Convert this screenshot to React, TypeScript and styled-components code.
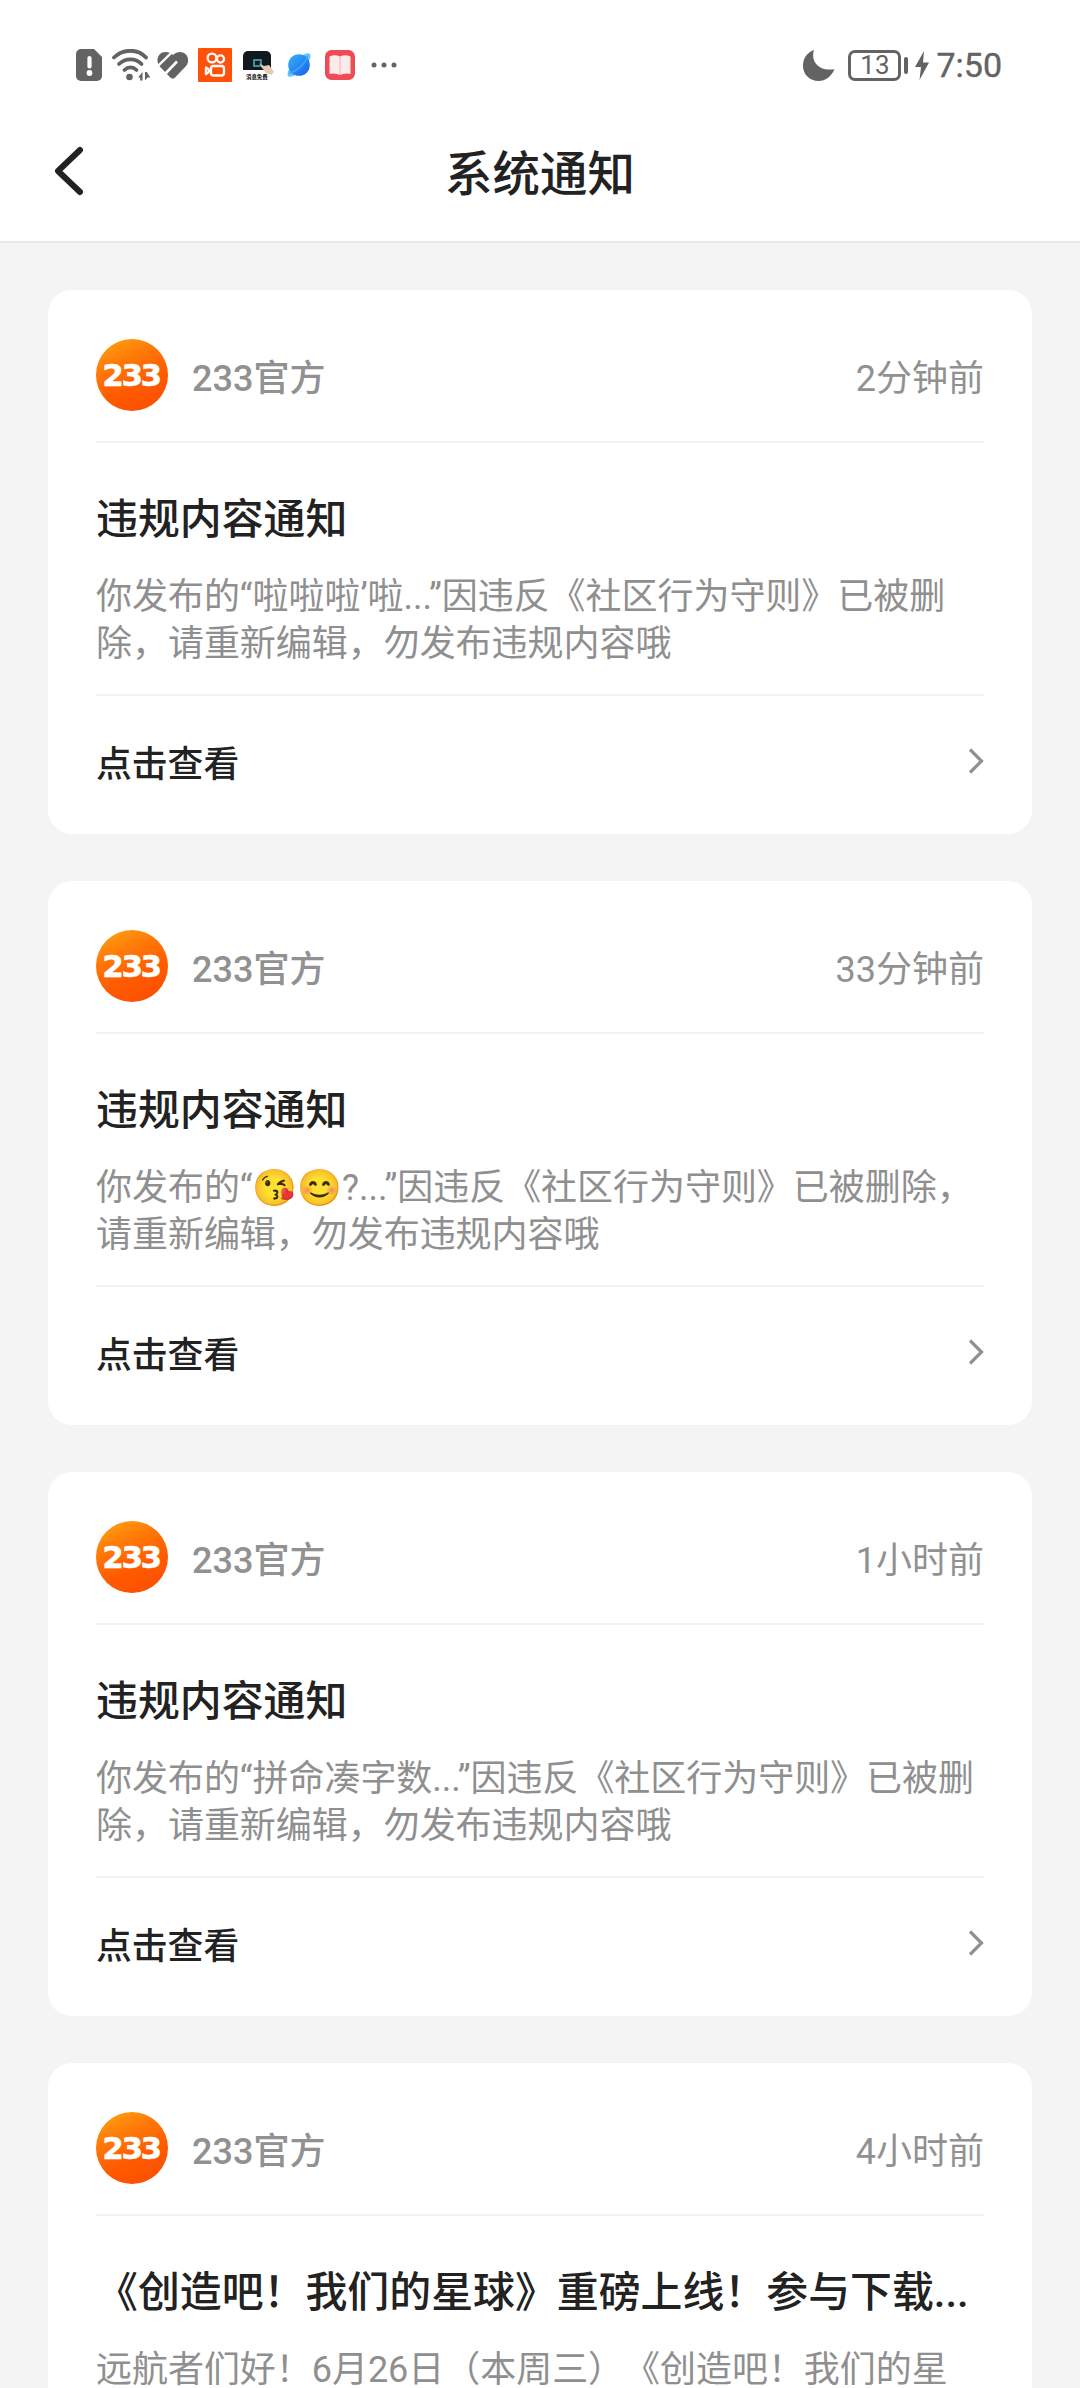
import React from "react";
import styled, { createGlobalStyle } from "styled-components";

const GlobalStyle = createGlobalStyle`
  * { box-sizing: border-box; }
  html, body { margin: 0; padding: 0; background: #f4f4f4; }
  body {
    font-family: Roboto, "Noto Sans CJK SC", "Noto Color Emoji", sans-serif;
    text-spacing-trim: space-all;
    overflow: hidden;
  }
`;

const Screen = styled.main`
  width: 1080px;
  height: 2388px;
  overflow: hidden;
  display: flex;
  flex-direction: column;
  background: #f4f4f4;
`;

const StatusBar = styled.header`
  height: 104px;
  flex: none;
  padding: 26px 78px 0 76px;
  display: flex;
  justify-content: space-between;
  align-items: flex-start;
  background: #fff;
  color: #636363;
`;

const StatusGroup = styled.div`
  display: flex;
  align-items: center;
  height: 78px;
`;

const StatusIcon = styled.svg<{ $gap?: number }>`
  display: block;
  flex: none;
  margin-left: ${(p) => p.$gap ?? 0}px;
`;

const Battery = styled.div`
  width: 53px;
  height: 31px;
  margin-left: 13px;
  border: 3px solid #636363;
  border-radius: 7px;
  display: flex;
  align-items: center;
  justify-content: center;
  font-size: 26px;
  line-height: 25px;
`;

const BatteryCap = styled.span`
  width: 4px;
  height: 17px;
  margin-left: 3px;
  border-radius: 2px;
  background: #636363;
`;

const Clock = styled.span`
  margin-left: 7px;
  font-size: 34px;
  line-height: 40px;
  -webkit-text-stroke: 0.4px #636363;
`;

const NavBar = styled.nav`
  height: 139px;
  flex: none;
  display: grid;
  grid-template-columns: 120px 1fr 120px;
  align-items: center;
  background: #fff;
  border-bottom: 2px solid #e9e9e9;
`;

const BackButton = styled.button`
  height: 134px;
  padding: 0 0 4px 52px;
  border: 0;
  background: none;
  display: flex;
  align-items: center;
`;

const PageTitle = styled.h1`
  margin: 0;
  padding-top: 4px;
  text-align: center;
  font-size: 47.5px;
  line-height: 60px;
  font-weight: 500;
  color: #222;
`;

const Feed = styled.section`
  flex: none;
  padding: 47px 48px 0;
  display: flex;
  flex-direction: column;
  gap: 47px;
`;

const Card = styled.article`
  height: 544px;
  flex: none;
  padding: 0 48px;
  border-radius: 24px;
  background: #fff;
`;

const CardHead = styled.div`
  height: 153px;
  padding: 49px 0 30px;
  display: flex;
  align-items: center;
  border-bottom: 2px solid #f1f1f1;
`;

const Avatar = styled.div`
  width: 72px;
  height: 72px;
  padding-right: 2px;
  border-radius: 50%;
  display: flex;
  align-items: center;
  justify-content: center;
  background: linear-gradient(155deg, #ffa210 4%, #ff7a08 32%, #ff5a00 62%, #fb4c02 100%);
  color: #fff;
  font: bold 31px/72px "DejaVu Sans", sans-serif;
  letter-spacing: -2.4px;
  -webkit-text-stroke: 0.5px #fff;
`;

const Sender = styled.span`
  flex: 1;
  margin-left: 24px;
  padding-top: 7px;
  font-size: 36px;
  line-height: 44px;
  font-weight: 500;
  color: #919191;
`;

const Time = styled.time`
  padding-top: 7px;
  font-size: 36px;
  line-height: 44px;
  color: #919191;
`;

const CardBody = styled.div`
  height: 253px;
  padding-top: 47px;
  border-bottom: 2px solid #f3f3f3;
`;

const CardTitle = styled.h2`
  margin: 0;
  font-size: 41.9px;
  line-height: 60px;
  font-weight: 500;
  color: #222;
  white-space: nowrap;
`;

const CardText = styled.p`
  margin: 24px 0 0;
  font-size: 36px;
  line-height: 47px;
  letter-spacing: -0.04px;
  color: #8f8f8f;
`;

const CardAction = styled.div`
  height: 138px;
  display: flex;
  align-items: center;
  justify-content: space-between;
  font-size: 35.8px;
  line-height: 44px;
  font-weight: 500;
  color: #222;
`;

const Chevron = styled.svg`
  display: block;
  margin-bottom: 9px;
`;

interface Notice {
  time: string;
  title: string;
  text: string;
}

const notices: Notice[] = [
  {
    time: "2分钟前",
    title: "违规内容通知",
    text: "你发布的“啦啦啦’啦...”因违反《社区行为守则》已被删除，请重新编辑，勿发布违规内容哦",
  },
  {
    time: "33分钟前",
    title: "违规内容通知",
    text: "你发布的“😘😊?...”因违反《社区行为守则》已被删除，请重新编辑，勿发布违规内容哦",
  },
  {
    time: "1小时前",
    title: "违规内容通知",
    text: "你发布的“拼命凑字数...”因违反《社区行为守则》已被删除，请重新编辑，勿发布违规内容哦",
  },
  {
    time: "4小时前",
    title: "《创造吧！我们的星球》重磅上线！参与下载...",
    text: "远航者们好！6月26日（本周三）《创造吧！我们的星",
  },
];

const G = "#636363";

function StatusLeft() {
  return (
    <StatusGroup>
      <StatusIcon width="26" height="32" viewBox="0 0 26 32">
        <path d="M5 0h13l8 8v19a5 5 0 0 1-5 5H5a5 5 0 0 1-5-5V5a5 5 0 0 1 5-5z" fill={G} />
        <path d="M13.500 9v8.500" stroke="#fff" strokeWidth="4.200" strokeLinecap="round" />
        <circle cx="13.500" cy="24" r="2.900" fill="#fff" />
      </StatusIcon>
      <StatusIcon $gap={9} width="40" height="32" viewBox="0 0 40 32">
        <g fill="none" stroke={G} strokeWidth="3.800" strokeLinecap="round">
          <path d="M3 8.500C12-.5 27-.5 35 8.500" />
          <path d="M8 15c6.500-6.300 16.500-6.300 22.500 0" />
          <path d="M13.500 21c3.500-3.500 8.500-3.500 12 0" />
        </g>
        <circle cx="18.500" cy="28" r="3.300" fill={G} />
        <path d="M31.500 23v8.500h-2.300v-3H27zM34 31.500V23h1.800l3.500 5.500h-2.800z" fill={G} />
      </StatusIcon>
      <StatusIcon $gap={6} width="32" height="28" viewBox="0 0 32 28">
        <path
          d="M8.500 1c3 0 5.500 1 7.500 3C18 2 20.500 1 23 1c5 0 8.300 4 8.100 8.500-.1 2.800-1.200 4.800-3 6.600L17.800 26.700c-1.300 1.200-3 1.200-4.200 0L3.200 16C1.300 14 .5 12 .5 9.300.5 4.500 4 1 8.500 1z"
          fill={G}
        />
        <path d="M.5 15.500 14.200 2" fill="none" stroke="#fff" strokeWidth="2.400" />
        <path d="M7.500 23.500 20 10.500" fill="none" stroke="#fff" strokeWidth="2.600" />
      </StatusIcon>
      <StatusIcon $gap={9} width="34" height="34" viewBox="0 0 34 34">
        <rect width="34" height="34" rx="1" fill="#ff5208" />
        <g fill="none" stroke="#fff" strokeWidth="2.300">
          <circle cx="14" cy="10" r="4.400" />
          <circle cx="22.500" cy="11" r="3.600" />
          <rect x="13" y="18" width="13" height="9.500" rx="2.500" />
          <path d="M12.500 22.800 8 19.500v6.500z" strokeLinejoin="round" />
        </g>
      </StatusIcon>
      <StatusIcon $gap={10} width="32" height="30" viewBox="0 0 32 30">
        <path d="M6 1h18a5 5 0 0 1 5 5v14H1V6a5 5 0 0 1 5-5z" fill="#11191f" />
        <path d="M18 16h-6v-6h7v6l2 2" fill="none" stroke="#4cb6c4" strokeWidth="1.500" />
        <path d="M17 13l5 3 5-1 5 7-3 3-5-2-3-4z" fill="#e8c9ae" />
        <text x="4" y="28.500" fontSize="5.400" fontWeight="700" fill="#000">消息免费</text>
      </StatusIcon>
      <StatusIcon $gap={12} width="26" height="26" viewBox="0 0 26 26">
        <defs>
          <linearGradient id="planet" x1="0" y1="0" x2="1" y2="1">
            <stop offset="0" stopColor="#35b4fb" />
            <stop offset="1" stopColor="#1560ee" />
          </linearGradient>
        </defs>
        <ellipse cx="13" cy="13" rx="15.500" ry="5.500" transform="rotate(-46 13 13)" fill="#5cc8fa" />
        <circle cx="13" cy="13" r="10.800" fill="url(#planet)" />
        <path d="M3.500 21C10 20 19 12 21.500 4.500" fill="none" stroke="#4a9df8" strokeWidth="1.800" />
      </StatusIcon>
      <StatusIcon $gap={13} width="30" height="30" viewBox="0 0 30 30">
        <rect width="30" height="30" rx="6.500" fill="#ef4a56" />
        <path d="M4.500 6.500Q10 4 15 6.500 20 4 25.500 6.500V24Q20 22.500 15 25 10 22.500 4.500 24z" fill="#fdeaea" />
        <path d="M15 6.500V25" stroke="#f3b5b8" strokeWidth="1" />
      </StatusIcon>
      <StatusIcon $gap={16} width="26" height="6" viewBox="0 0 26 6">
        <circle cx="3" cy="3" r="2.500" fill={G} />
        <circle cx="13" cy="3" r="2.500" fill={G} />
        <circle cx="23" cy="3" r="2.500" fill={G} />
      </StatusIcon>
    </StatusGroup>
  );
}

function StatusRight() {
  return (
    <StatusGroup>
      <StatusIcon width="32" height="31" viewBox="0 0 32 31">
        <path d="M11 0C7.500 11 15 21.500 31.500 19.300 28 27 22.500 31 15.500 31 6.500 31 0 24.500 0 15.800 0 8.500 4 2.500 11 0z" fill={G} />
      </StatusIcon>
      <Battery>13</Battery>
      <BatteryCap />
      <StatusIcon $gap={7} width="14" height="29" viewBox="0 0 14 29">
        <path d="M9 0 0 16h6L4.500 29 14 11.500H8z" fill={G} />
      </StatusIcon>
      <Clock>7:50</Clock>
    </StatusGroup>
  );
}

function NoticeCard({ time, title, text }: Notice) {
  return (
    <Card>
      <CardHead>
        <Avatar>233</Avatar>
        <Sender>233官方</Sender>
        <Time>{time}</Time>
      </CardHead>
      <CardBody>
        <CardTitle>{title}</CardTitle>
        <CardText>{text}</CardText>
      </CardBody>
      <CardAction>
        点击查看
        <Chevron width="16" height="28" viewBox="0 0 16 28">
          <path d="M2 2.500 13.500 14 2 25.500" fill="none" stroke="#919191" strokeWidth="3.200" />
        </Chevron>
      </CardAction>
    </Card>
  );
}

export default function App() {
  return (
    <Screen lang="zh-CN">
      <GlobalStyle />
      <StatusBar>
        <StatusLeft />
        <StatusRight />
      </StatusBar>
      <NavBar>
        <BackButton aria-label="返回">
          <svg width="32" height="50" viewBox="0 0 32 50">
            <path d="M28 4 6 25 28 46" fill="none" stroke="#222" strokeWidth="6" strokeLinecap="round" strokeLinejoin="round" />
          </svg>
        </BackButton>
        <PageTitle>系统通知</PageTitle>
      </NavBar>
      <Feed>
        {notices.map((n) => (
          <NoticeCard key={n.time} {...n} />
        ))}
      </Feed>
    </Screen>
  );
}
